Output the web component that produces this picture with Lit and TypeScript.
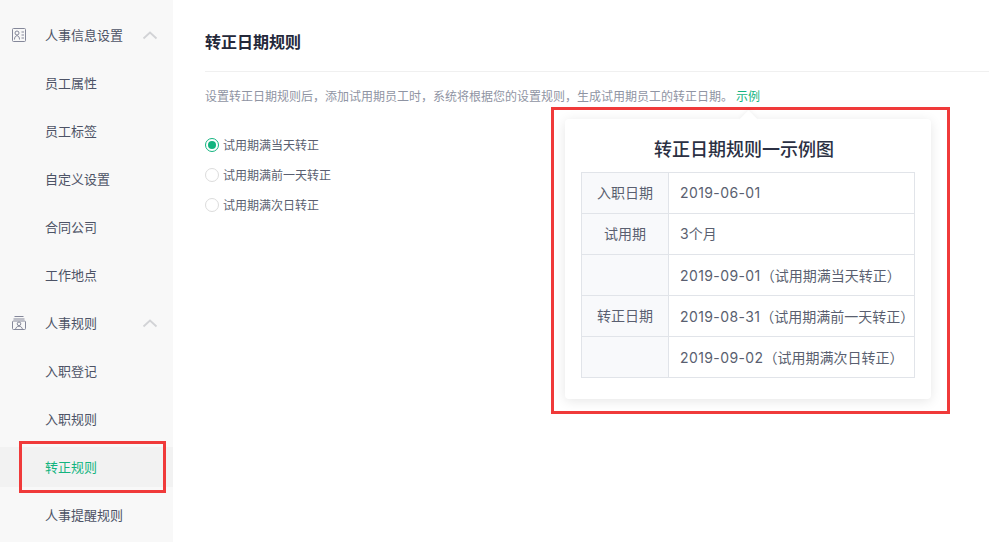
import { LitElement, html, css, svg } from "lit";
import { customElement } from "lit/decorators.js";

const chevron = html`<svg class="chev" width="16" height="9" viewBox="0 0 16 9"><path d="M1.5 7.5 8 1.5l6.5 6" fill="none" stroke="#d2d3d6" stroke-width="1.8"/></svg>`;
const cardIcon = html`<svg class="ico" width="15" height="15" viewBox="0 0 15 15" fill="none" stroke="#85889a" stroke-width="1"><rect x=".5" y="1.5" width="13" height="13" rx="1"/>${svg`<circle cx="5" cy="6" r="2"/><path d="M2.500 12.500c0-2.200 1-3.800 2.500-3.800s2.500 1.600 2.500 3.800M9.500 5H12M9.500 8H12M9.500 11H12"/>`}</svg>`;
const ruleIcon = html`<svg class="ico" width="15" height="15" viewBox="0 0 15 15" fill="none" stroke="#85889a" stroke-width="1"><path d="M2.500 1.500h9M1.500 4h11"/><rect x=".5" y="6" width="13" height="8.500" rx="1"/>${svg`<circle cx="7" cy="8.800" r="1.800"/><path d="M3.500 14.500c.3-2 1.700-3.300 3.500-3.300s3.200 1.300 3.500 3.300"/>`}</svg>`;

@customElement("app-root")
export class AppRoot extends LitElement {
  static styles = css`
    :host {
      display: block;
      position: relative;
      width: 989px;
      height: 542px;
      overflow: hidden;
      background: #fff;
      font-family: "Liberation Sans", "Noto Sans CJK SC", sans-serif;
      color: #4d5366;
    }
    .page { display: flex; height: 542px; }
    .side {
      width: 173px;
      flex: none;
      background: #f8f8f8;
      padding-top: 10px;
      box-sizing: border-box;
      font-size: 13px;
      overflow: hidden;
    }
    .row {
      height: 48px;
      display: flex;
      align-items: center;
      padding-left: 45px;
      position: relative;
      box-sizing: border-box;
      flex: none;
    }
    .ico { position: absolute; left: 12px; top: 17px; }
    .chev { position: absolute; left: 142px; top: 21px; }
    .active { color: #13b47f; }
    .active::before {
      content: "";
      position: absolute;
      left: 0;
      right: 0;
      top: 5px;
      bottom: 3px;
      background: #f2f2f2;
    }
    .active span { position: relative; }
    .active::after {
      content: "";
      position: absolute;
      left: 19px;
      top: -1px;
      width: 147px;
      height: 52px;
      box-sizing: border-box;
      border: 3px solid #f03a3a;
    }
    .main { flex: 1; padding-left: 32px; min-width: 0; }
    h1 {
      margin: 0;
      height: 57px;
      padding-top: 14px;
      box-sizing: content-box;
      border-bottom: 1px solid #f0f0f0;
      display: flex;
      align-items: center;
      font-size: 16px;
      font-weight: 700;
      color: #24283a;
      line-height: 1;
    }
    .desc {
      margin: 0;
      padding-top: 16px;
      line-height: 18px;
      font-size: 12px;
      color: #8f94a3;
    }
    .desc a { color: #13b47f; margin-left: 3px; }
    .radios { margin-top: 24px; display: flex; flex-direction: column; }
    .radio {
      height: 30px;
      display: flex;
      align-items: center;
      gap: 4px;
      font-size: 12px;
      color: #5a5f70;
    }
    .radio span { margin-bottom: 2px; }
    .dot {
      width: 14px;
      height: 14px;
      box-sizing: border-box;
      border: 1px solid #dcdcdc;
      border-radius: 50%;
      display: flex;
      align-items: center;
      justify-content: center;
      background: #fff;
    }
    .dot.on { border-color: #13b47f; }
    .dot.on::after {
      content: "";
      width: 8px;
      height: 8px;
      border-radius: 50%;
      background: #13b47f;
    }
    .mark {
      position: absolute;
      left: 551px;
      top: 107px;
      width: 399px;
      height: 307px;
      box-sizing: border-box;
      border: 3px solid #f03a3a;
    }
    .card {
      position: absolute;
      left: 565px;
      top: 119px;
      width: 366px;
      height: 280px;
      box-sizing: border-box;
      padding: 20px 16px 0;
      background: #fff;
      border-radius: 4px;
      box-shadow: 0 2px 12px rgba(0, 0, 0, 0.1);
    }
    .card::before {
      content: "";
      position: absolute;
      left: 177px;
      top: -6px;
      width: 13px;
      height: 13px;
      background: #fff;
      transform: rotate(45deg);
      box-shadow: -2px -2px 4px rgba(0, 0, 0, 0.03);
    }
    h2 {
      position: relative;
      margin: 0 0 11px;
      padding-right: 8px;
      font-size: 18px;
      line-height: 22px;
      font-weight: 500;
      text-align: center;
      color: #2b3043;
    }
    table {
      border-collapse: collapse;
      width: 334px;
      table-layout: fixed;
      font-family: "Inter", "Noto Sans CJK SC", sans-serif;
      font-size: 14px;
      color: #5a5f70;
    }
    td {
      border: 1px solid #e1e4e9;
      height: 41px;
      padding: 0 0 1px 11px;
      box-sizing: border-box;
      white-space: nowrap;
    }
    td.k {
      width: 87px;
      padding: 0 0 3px;
      text-align: center;
      background: #f8f9fb;
    }
    td.cjk { padding-bottom: 3px; }
    .date { letter-spacing: 0.4px; }
  `;

  render() {
    const top = ["员工属性", "员工标签", "自定义设置", "合同公司", "工作地点"];
    const sub = ["入职登记", "入职规则"];
    const tableRows: [string, string, string][] = [
      ["入职日期", "2019-06-01", ""],
      ["试用期", "", "3个月"],
      ["", "2019-09-01", "（试用期满当天转正）"],
      ["转正日期", "2019-08-31", "（试用期满前一天转正）"],
      ["", "2019-09-02", "（试用期满次日转正）"],
    ];
    return html`
      <div class="page">
        <nav class="side">
          <div class="row">${cardIcon}<span>人事信息设置</span>${chevron}</div>
          ${top.map((t) => html`<div class="row"><span>${t}</span></div>`)}
          <div class="row">${ruleIcon}<span>人事规则</span>${chevron}</div>
          ${sub.map((t) => html`<div class="row"><span>${t}</span></div>`)}
          <div class="row active"><span>转正规则</span></div>
          <div class="row"><span>人事提醒规则</span></div>
        </nav>
        <main class="main">
          <h1>转正日期规则</h1>
          <p class="desc">设置转正日期规则后，添加试用期员工时，系统将根据您的设置规则，生成试用期员工的转正日期。<a>示例</a></p>
          <div class="radios">
            <label class="radio"><i class="dot on"></i><span>试用期满当天转正</span></label>
            <label class="radio"><i class="dot"></i><span>试用期满前一天转正</span></label>
            <label class="radio"><i class="dot"></i><span>试用期满次日转正</span></label>
          </div>
        </main>
      </div>
      <div class="mark"></div>
      <div class="card">
        <h2>转正日期规则一示例图</h2>
        <table>
          ${tableRows.map(
            ([k, d, t]) => html`<tr><td class="k">${k}</td><td class=${d ? "" : "cjk"}><span class="date">${d}</span>${t}</td></tr>`
          )}
        </table>
      </div>
    `;
  }
}
